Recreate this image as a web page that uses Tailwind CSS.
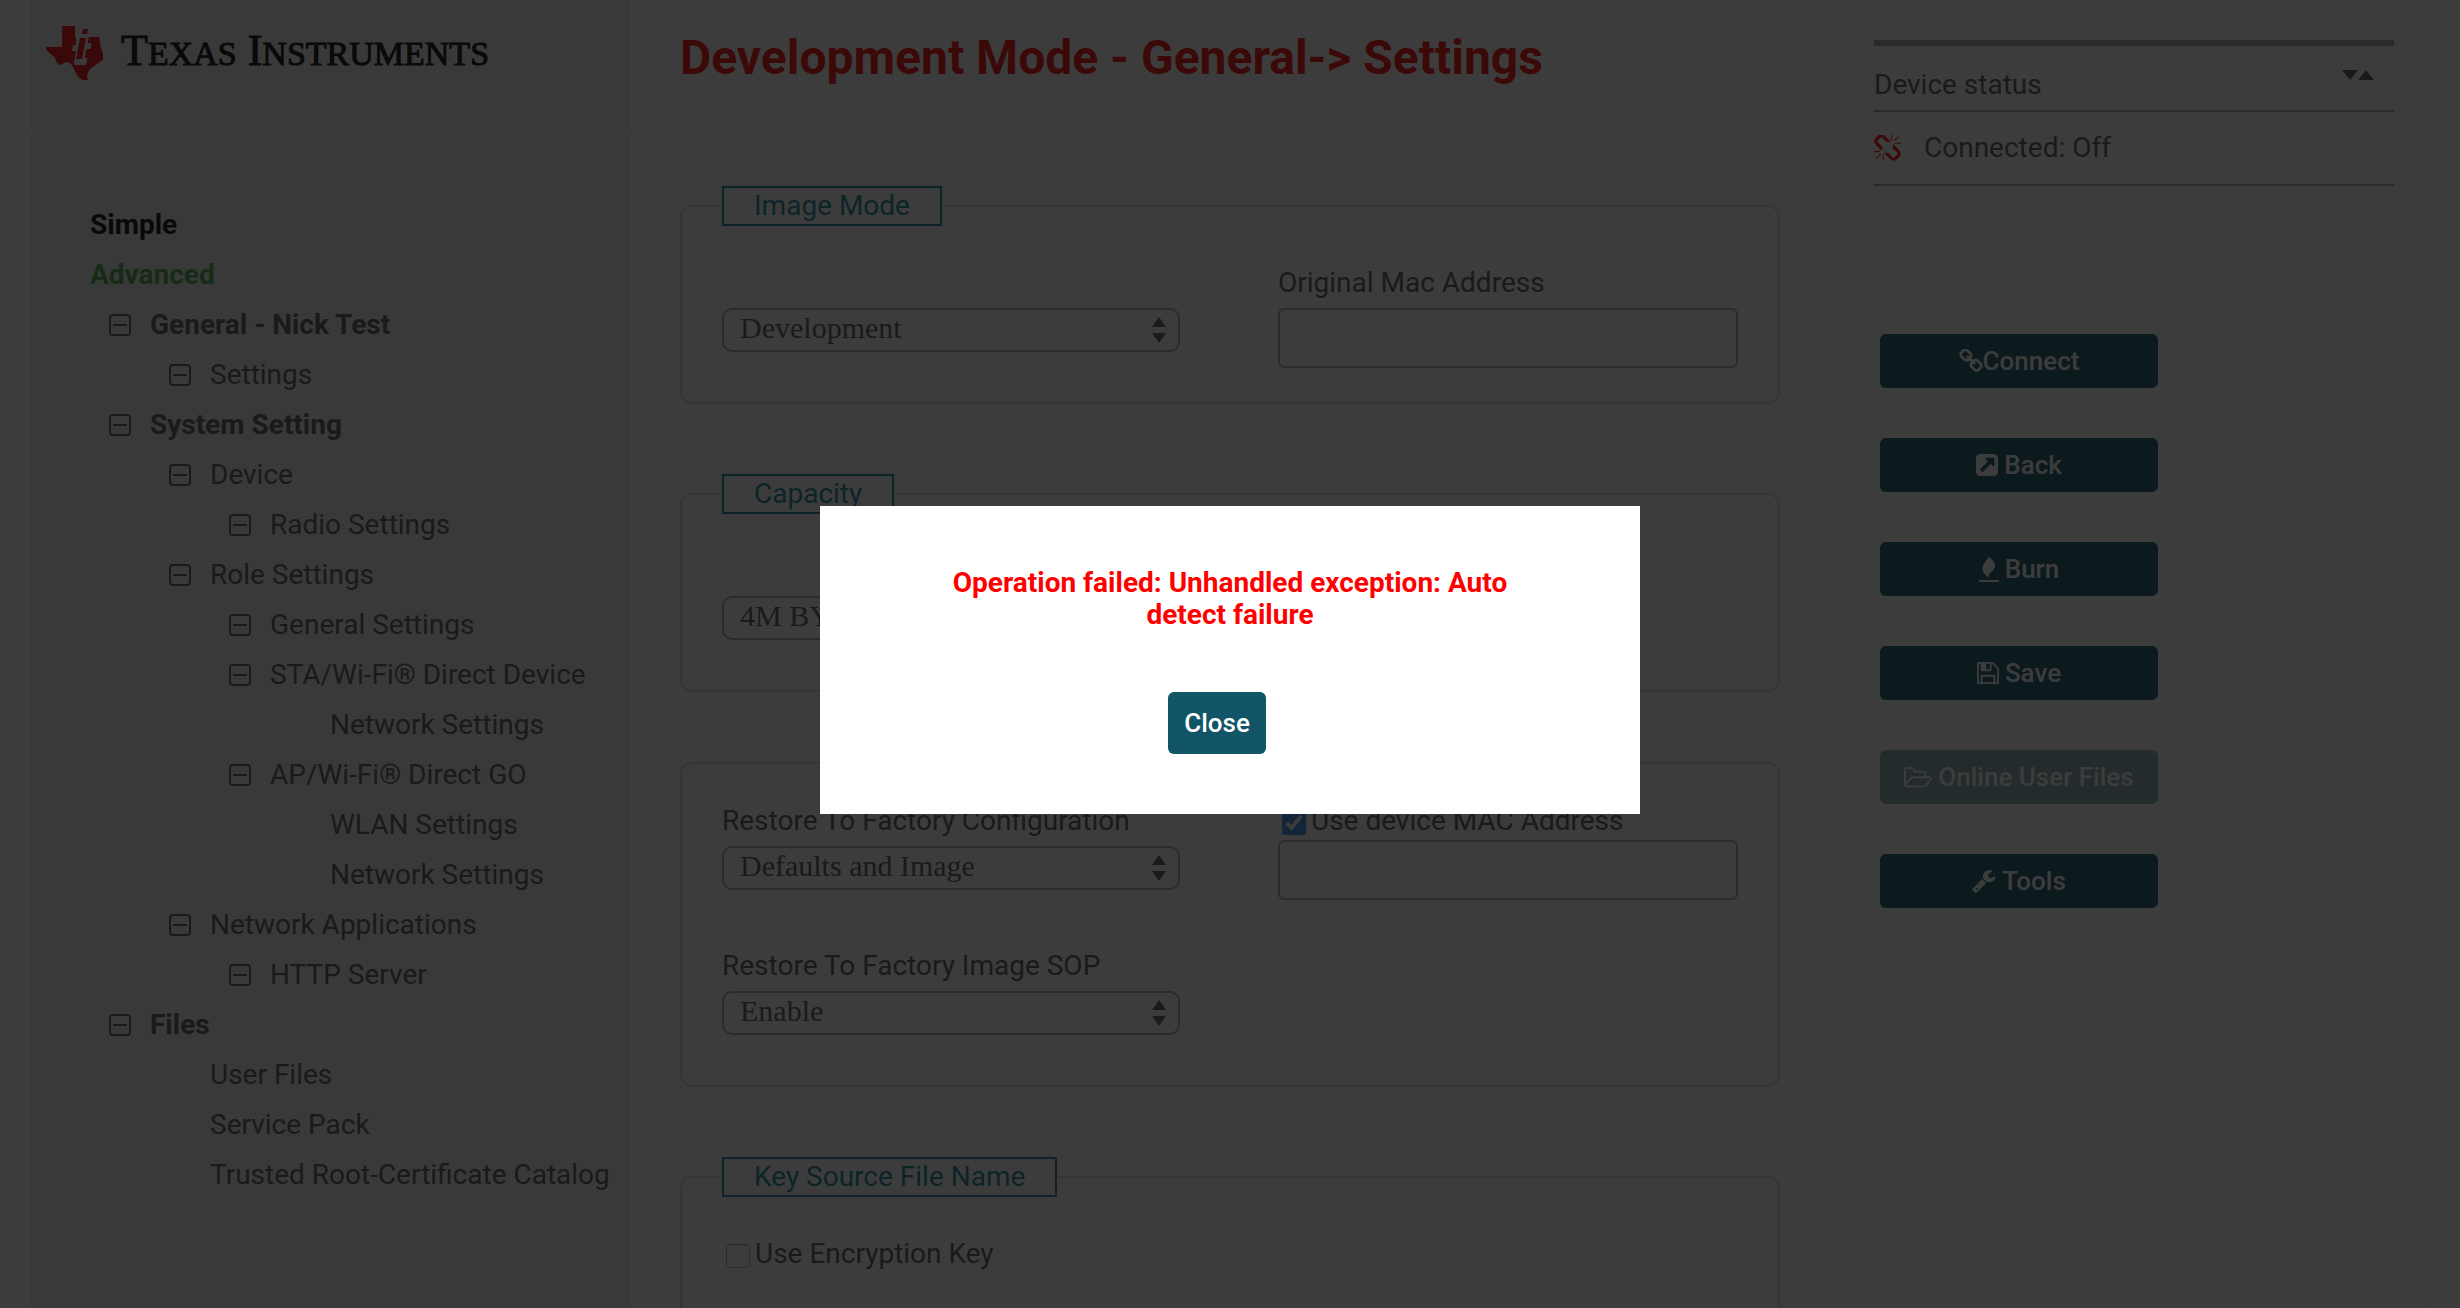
<!DOCTYPE html>
<html lang="en">
<head>
  <meta charset="UTF-8" />
  <meta name="viewport" content="width=device-width, initial-scale=1.0" />
  <title>Texas Instruments - Image Creator</title>
  <script src="https://cdn.jsdelivr.net/npm/@tailwindcss/browser@4"></script>
</head>
<body class="h-screen overflow-hidden bg-white font-['Roboto','Liberation_Sans',sans-serif] text-[28px] leading-[32px] text-[#555]">

  <!-- Shared icons -->
  <svg class="hidden">
    <symbol id="i-minus" viewBox="0 0 22 22"><rect x="1" y="1" width="20" height="20" rx="3" fill="none" stroke="currentColor" stroke-width="2"/><path d="M4 10h14v2H4z" fill="currentColor"/></symbol>
    <symbol id="i-sort" viewBox="0 0 14 26"><path d="M7 0l7 10H0zM7 26l7-10H0z" fill="currentColor"/></symbol>
  </svg>

  <div class="grid min-h-screen grid-cols-[600px_1fr_604px] pl-[30px] pr-[33px]">

    <!-- Left Column -->
    <aside class="flex flex-col bg-[#eee]">
      <header class="flex h-[132px] items-start gap-[18px] border-b-2 border-white pl-4 pt-[26px]">
        <svg class="h-[54px] w-[57px] shrink-0" viewBox="0 0 57 54">
          <path fill="#ee0000" d="M16 0h13v11h24l1 3v5l3 8v7c-6 4-13 8-15 12-1 3-1 5 0 8h-5c-5-2-7-6-9-11-2-4-4-7-7-7s-4 3-6 3c-4-1-5-4-6-7C6 28 0 26 0 22v-1h16z"/>
          <path fill="#eee" d="M30 10h13l-1.500 7h4l-1 6h-4l-2 9h3l-1.500 7H30c-2 0-2.500-1-2-3l2-11h-4l1-6h3z"/>
          <path fill="#ee0000" d="M34 12h6l-4 21h-6zM37 3h5l-1 5h-5z"/>
        </svg>
        <div class="font-['Liberation_Serif',serif] text-[34px] leading-[50px] whitespace-nowrap text-black [-webkit-text-stroke:1px_black]"><span class="text-[44px]">T</span>EXAS<span class="text-[44px]"> I</span>NSTRUMENTS</div>
      </header>

      <nav class="pt-[68px] pl-[60px] leading-[50px]">
        <ul>
          <li><a href="#" class="font-bold text-black">Simple</a></li>
          <li><a href="#" class="font-bold text-[#44aa44]">Advanced</a></li>
        </ul>
        <ul class="pl-[19px]">
          <li class="flex items-center gap-[19px] font-bold"><svg class="size-[22px]"><use href="#i-minus"/></svg><a href="#">General - Nick Test</a></li>
          <li class="flex items-center gap-[19px] pl-[60px]"><svg class="size-[22px]"><use href="#i-minus"/></svg><a href="#">Settings</a></li>
          <li class="flex items-center gap-[19px] font-bold"><svg class="size-[22px]"><use href="#i-minus"/></svg><a href="#">System Setting</a></li>
          <li class="flex items-center gap-[19px] pl-[60px]"><svg class="size-[22px]"><use href="#i-minus"/></svg><a href="#">Device</a></li>
          <li class="flex items-center gap-[19px] pl-[120px]"><svg class="size-[22px]"><use href="#i-minus"/></svg><a href="#">Radio Settings</a></li>
          <li class="flex items-center gap-[19px] pl-[60px]"><svg class="size-[22px]"><use href="#i-minus"/></svg><a href="#">Role Settings</a></li>
          <li class="flex items-center gap-[19px] pl-[120px]"><svg class="size-[22px]"><use href="#i-minus"/></svg><a href="#">General Settings</a></li>
          <li class="flex items-center gap-[19px] pl-[120px]"><svg class="size-[22px]"><use href="#i-minus"/></svg><a href="#">STA/Wi-Fi® Direct Device</a></li>
          <li class="pl-[221px]"><a href="#">Network Settings</a></li>
          <li class="flex items-center gap-[19px] pl-[120px]"><svg class="size-[22px]"><use href="#i-minus"/></svg><a href="#">AP/Wi-Fi® Direct GO</a></li>
          <li class="pl-[221px]"><a href="#">WLAN Settings</a></li>
          <li class="pl-[221px]"><a href="#">Network Settings</a></li>
          <li class="flex items-center gap-[19px] pl-[60px]"><svg class="size-[22px]"><use href="#i-minus"/></svg><a href="#">Network Applications</a></li>
          <li class="flex items-center gap-[19px] pl-[120px]"><svg class="size-[22px]"><use href="#i-minus"/></svg><a href="#">HTTP Server</a></li>
          <li class="flex items-center gap-[19px] font-bold"><svg class="size-[22px]"><use href="#i-minus"/></svg><a href="#">Files</a></li>
          <li class="pl-[101px]"><a href="#">User Files</a></li>
          <li class="pl-[101px]"><a href="#">Service Pack</a></li>
          <li class="pl-[101px]"><a href="#">Trusted Root-Certificate Catalog</a></li>
        </ul>
      </nav>
    </aside>

    <!-- Settings form -->
    <main class="h-screen overflow-hidden pt-[30px] pr-[43px] pl-[50px]">
      <h1 class="mb-[100px] text-[48px] leading-[56px] font-bold text-[#ff0000]">Development Mode - General-&gt; Settings</h1>

      <form class="flex flex-col gap-[70px]">
        <fieldset class="rounded-xl border-2 border-[#ddd] px-10">
          <legend class="border-2 border-[#118899] px-[30px] leading-[36px] text-[#118899]">Image Mode</legend>
          <div class="grid grid-cols-[458px_460px] items-start gap-x-[98px] pt-[41px]">
            <div class="relative mt-[41px] mb-[50px]">
              <select aria-label="Image Mode" class="h-11 w-full appearance-none rounded-[10px] border-2 border-[#aaa] bg-white pb-1 pl-4 font-['Liberation_Serif',serif] text-[30px] leading-[36px]"><option>Development</option></select>
              <svg class="pointer-events-none absolute top-[9px] right-[14px] h-[26px] w-[14px]"><use href="#i-sort"/></svg>
            </div>
            <div class="mb-[34px]">
              <label for="orig-mac" class="mb-[9px] block">Original Mac Address</label>
              <input id="orig-mac" type="text" class="block h-[60px] w-full rounded-md border-2 border-[#aaa] px-3" />
            </div>
          </div>
        </fieldset>

        <fieldset class="rounded-xl border-2 border-[#ddd] px-10">
          <legend class="border-2 border-[#118899] px-[30px] leading-[36px] text-[#118899]">Capacity</legend>
          <div class="grid grid-cols-[458px_460px] items-start gap-x-[98px] pt-[41px]">
            <div class="relative mt-[41px] mb-[50px]">
              <select aria-label="Capacity" class="h-11 w-full appearance-none rounded-[10px] border-2 border-[#aaa] bg-white pb-1 pl-4 font-['Liberation_Serif',serif] text-[30px] leading-[36px]"><option>4M BYTE</option></select>
              <svg class="pointer-events-none absolute top-[9px] right-[14px] h-[26px] w-[14px]"><use href="#i-sort"/></svg>
            </div>
          </div>
        </fieldset>

        <fieldset class="rounded-xl border-2 border-[#ddd] px-10">
          <div class="grid grid-cols-[458px_460px] items-start gap-x-[98px] gap-y-[10px] pt-[41px]">
            <div class="mb-[50px]">
              <label for="restore-conf" class="mb-[9px] block">Restore To Factory Configuration</label>
              <div class="relative">
                <select id="restore-conf" class="block h-11 w-full appearance-none rounded-[10px] border-2 border-[#aaa] bg-white pb-1 pl-4 font-['Liberation_Serif',serif] text-[30px] leading-[36px]"><option>Defaults and Image</option></select>
                <svg class="pointer-events-none absolute top-[9px] right-[14px] h-[26px] w-[14px]"><use href="#i-sort"/></svg>
              </div>
            </div>
            <div>
              <label class="mb-[3px] flex items-center gap-[5px]"><input type="checkbox" checked class="mt-1 ml-1 size-6 accent-[#3b8df0]" />Use device MAC Address</label>
              <input type="text" aria-label="MAC Address" class="block h-[60px] w-full rounded-md border-2 border-[#aaa] px-3" />
            </div>
            <div class="mb-[50px]">
              <label for="restore-sop" class="mb-[9px] block">Restore To Factory Image SOP</label>
              <div class="relative">
                <select id="restore-sop" class="block h-11 w-full appearance-none rounded-[10px] border-2 border-[#aaa] bg-white pb-1 pl-4 font-['Liberation_Serif',serif] text-[30px] leading-[36px]"><option>Enable</option></select>
                <svg class="pointer-events-none absolute top-[9px] right-[14px] h-[26px] w-[14px]"><use href="#i-sort"/></svg>
              </div>
            </div>
          </div>
        </fieldset>

        <fieldset class="h-[240px] rounded-xl border-2 border-[#ddd] px-10">
          <legend class="border-2 border-[#118899] px-[30px] leading-[36px] text-[#118899]">Key Source File Name</legend>
          <label class="flex items-center gap-[5px] pt-[41px]"><input type="checkbox" class="mt-1 ml-1 size-6 appearance-none rounded-[5px] border border-[#aaa] border-t-[#888]" />Use Encryption Key</label>
        </fieldset>
      </form>
    </main>

    <!-- Device status and actions -->
    <aside class="border-x-2 border-[#f4f4f4] pt-10 pr-[31px] pl-[49px]">
      <div class="border-t-6 border-b-2 border-[#aaa]">
        <div class="flex h-16 items-start justify-between pt-[23px] pr-5">
          <span>Device status</span>
          <svg class="mt-px h-[10px] w-8" viewBox="0 0 32 10" fill="currentColor"><path d="M0 0h16L8 10zM16 10h16L24 0z"/></svg>
        </div>
      </div>
      <div class="flex h-[74px] items-center gap-[23px] border-b-2 border-[#aaa]">
        <svg class="size-[27px]" viewBox="64 64 1664 1664" fill="#ff0000"><path d="M503 1271l-256 256q-10 9-23 9-12 0-23-9-9-10-9-23t9-23l256-256q10-9 23-9t23 9q9 10 9 23t-9 23zm169 41v320q0 14-9 23t-23 9-23-9-9-23v-320q0-14 9-23t23-9 23 9 9 23zm-224-224q0 14-9 23t-23 9h-320q-14 0-23-9t-9-23 9-23 23-9h320q14 0 23 9t9 23zm1264 128q0 120-85 203l-147 146q-83 83-203 83-121 0-204-85l-334-335q-21-21-42-56l239-18 273 274q28 28 68 28.500t68-27.500l147-146q28-28 28-67 0-40-28-68l-274-275 18-239q35 21 56 42l336 336q84 86 84 204zm-617-724l-239 18-273-274q-28-28-68-28-39 0-68 27l-147 146q-28 28-28 67 0 40 28 68l274 274-18 240q-35-21-56-42l-336-336q-84-86-84-204 0-120 85-203l147-146q83-83 203-83 121 0 204 85l334 335q21 21 42 56zm633 84q0 14-9 23t-23 9h-320q-14 0-23-9t-9-23 9-23 23-9h320q14 0 23 9t9 23zm-544-544v320q0 14-9 23t-23 9-23-9-9-23v-320q0-14 9-23t23-9 23 9 9 23zm407 151l-256 256q-11 9-23 9t-23-9q-9-10-9-23t9-23l256-256q10-9 23-9t23 9q9 10 9 23t-9 23z"/></svg>
        <span>Connected: Off</span>
      </div>

      <div class="mt-[148px] ml-[6px] flex w-[278px] flex-col gap-[50px] text-[26px] font-medium text-white">
        <button class="flex h-[54px] items-center justify-center rounded-md bg-[#115566]">
          <svg class="size-6" viewBox="64 64 1664 1664" fill="currentColor"><path d="M1520 1216q0-40-28-68l-208-208q-28-28-68-28-42 0-72 32 3 3 19 18.500t21.500 21.500 15 19 13 25.500 3.500 27.500q0 40-28 68t-68 28q-15 0-27.500-3.500t-25.500-13-19-15-21.500-21.500-18.500-19q-33 31-33 73 0 40 28 68l206 207q27 27 68 27 40 0 68-26l147-146q28-28 28-67zm-703-705q0-40-28-68l-206-207q-28-28-68-28-39 0-68 27l-147 146q-28 28-28 67 0 40 28 68l208 208q27 27 68 27 42 0 72-31-3-3-19-18.500t-21.500-21.500-15-19-13-25.500-3.500-27.500q0-40 28-68t68-28q15 0 27.500 3.500t25.500 13 19 15 21.500 21.500 18.500 19q33-31 33-73zm895 705q0 120-85 203l-147 146q-83 83-203 83-121 0-204-85l-206-207q-83-83-83-203 0-123 88-209l-88-88q-86 88-208 88-120 0-204-84l-208-208q-84-84-84-204t85-203l147-146q83-83 203-83 121 0 204 85l206 207q83 83 83 203 0 123-88 209l88 88q86-88 208-88 120 0 204 84l208 208q84 84 84 204z"/></svg>Connect
        </button>
        <button class="flex h-[54px] items-center justify-center gap-[6px] rounded-md bg-[#115566]">
          <svg class="size-[22px]" viewBox="128 128 1536 1536" fill="currentColor"><path d="M1408 928v-480q0-26-19-45t-45-19h-480q-42 0-59 39-17 41 14 70l144 144-534 534q-19 19-19 45t19 45l102 102q19 19 45 19t45-19l534-534 144 144q18 19 45 19 12 0 25-5 39-17 39-59zm256-512v960q0 119-84.500 203.500t-203.500 84.500h-960q-119 0-203.500-84.500t-84.500-203.500v-960q0-119 84.500-203.500t203.500-84.500h960q119 0 203.500 84.500t84.500 203.500z"/></svg>Back
        </button>
        <button class="flex h-[54px] items-center justify-center gap-[6px] rounded-md bg-[#115566]">
          <svg class="h-[26px] w-5" viewBox="0 0 20 26" fill="currentColor"><path d="M9 0c1.500 4-5.500 6-5.500 12.500 0 4 3 7 6.500 9-1.500-5 6-6 6-12C16 5 12 3 9 0zM0 24h20v2H0z"/></svg>Burn
        </button>
        <button class="flex h-[54px] items-center justify-center gap-[6px] rounded-md bg-[#115566]">
          <svg class="size-[22px]" viewBox="128 128 1536 1536" fill="currentColor"><path d="M512 1536h768v-384h-768v384zm896 0h128v-896q0-14-10-38.500t-20-34.500l-281-281q-10-10-34-20t-39-10v416q0 40-28 68t-68 28h-576q-40 0-68-28t-28-68v-416h-128v1280h128v-416q0-40 28-68t68-28h832q40 0 68 28t28 68v416zm-384-928v-320q0-13-9.500-22.500t-22.500-9.500h-192q-13 0-22.500 9.500t-9.500 22.500v320q0 13 9.500 22.500t22.500 9.500h192q13 0 22.500-9.500t9.500-22.500zm640 32v928q0 40-28 68t-68 28h-1344q-40 0-68-28t-28-68v-1344q0-40 28-68t68-28h928q40 0 88 20t76 48l280 280q28 28 48 76t20 88z"/></svg>Save
        </button>
        <button disabled class="flex h-[54px] items-center justify-center gap-[6px] rounded-md bg-[#115566] whitespace-nowrap opacity-50">
          <svg class="h-[22px] w-7" viewBox="0 226 1920 1440" fill="currentColor"><path d="M1781 1061q0-35-53-35h-1088q-40 0-85.500 21.500t-71.500 52.500l-294 363q-18 24-18 40 0 35 53 35h1088q40 0 86-22t71-53l294-363q18-22 18-39zm-1141-163h768v-160q0-40-28-68t-68-28h-576q-40 0-68-28t-28-68v-64q0-40-28-68t-68-28h-320q-40 0-68 28t-28 68v853l256-315q44-53 116-87.500t140-34.500zm1269 163q0 62-46 120l-295 363q-43 53-116 87.500t-140 34.500h-1088q-92 0-158-66t-66-158v-960q0-92 66-158t158-66h320q92 0 158 66t66 158v32h544q92 0 158 66t66 158v160h192q54 0 99 24.500t67 70.500q15 32 15 68z"/></svg>Online User Files
        </button>
        <button class="flex h-[54px] items-center justify-center gap-[6px] rounded-md bg-[#115566]">
          <svg class="size-6" viewBox="64 64 1696 1728" fill="currentColor"><path d="M448 1472q0-26-19-45t-45-19-45 19-19 45 19 45 45 19 45-19 19-45zm644-420l-682 682q-37 37-90 37-52 0-91-37l-106-108q-38-36-38-90 0-53 38-91l681-681q39 98 114.500 173.500t173.500 114.500zm634-435q0 39-23 106-47 134-164.500 217.500t-258.500 83.500q-185 0-316.500-131.500t-131.500-316.500 131.500-316.500 316.500-131.500q58 0 121.500 16.500t107.500 46.500q16 11 16 28t-16 28l-293 169v224l193 107q5-3 79-48.500t135.500-81 70.500-35.500q15 0 23.500 10t8.500 25z"/></svg>Tools
        </button>
      </div>
    </aside>
  </div>

  <!-- Error popup -->
  <div id="popup" class="fixed inset-0 flex items-center justify-center bg-[#0b0b0b]/80 pt-3">
    <div role="alertdialog" aria-labelledby="popup-msg" class="flex w-1/3 flex-col items-center gap-[61px] bg-white px-[120px] pt-[61px] pb-[60px]">
      <p id="popup-msg" class="text-center font-bold text-[#ff0000]">Operation failed: Unhandled exception: Auto detect failure</p>
      <button id="popup-close" class="mr-[26px] h-[62px] rounded-md bg-[#115566] px-4 text-[26px] font-medium text-white">Close</button>
    </div>
  </div>

  <script>
    document.getElementById('popup-close').onclick = () => {
      document.getElementById('popup').style.display = 'none';
    };
  </script>
</body>
</html>
